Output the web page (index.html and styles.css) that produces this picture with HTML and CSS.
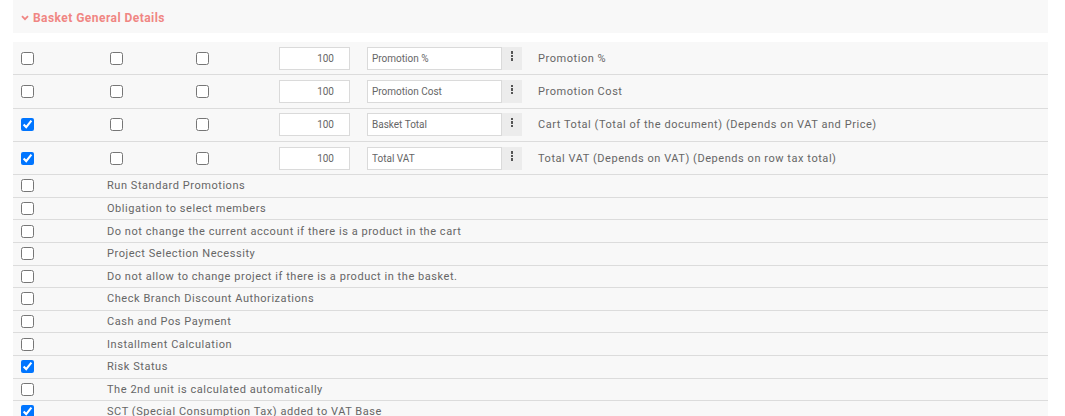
FILE: index.html
```html
<!DOCTYPE html>
<html lang="en">
<head>
    <meta charset="UTF-8">
    <meta name="viewport" content="width=device-width, initial-scale=1.0">
    <title>Basket General Details</title>
    <link rel="stylesheet" href="styles.css">
</head>
<body>

  <div class="panel">
    <div class="panel-head">
      <svg class="chevron" width="8" height="6" viewBox="0 0 8 6"><path d="M1 1.2 L4 4.2 L7 1.2" fill="none" stroke="#f08683" stroke-width="1.8"/></svg>
      <span>Basket General Details</span>
    </div>

    <div class="rows">
      <div class="row big">
        <div><input type="checkbox"></div>
        <div><input type="checkbox"></div>
        <div><input type="checkbox"></div>
        <div><input class="num" type="text" value="100"></div>
        <div><input class="name" type="text" value="Promotion %"></div>
        <div><span class="more"><i></i><i></i><i></i></span></div>
        <div class="label">Promotion %</div>
      </div>
      <div class="row big">
        <div><input type="checkbox"></div>
        <div><input type="checkbox"></div>
        <div><input type="checkbox"></div>
        <div><input class="num" type="text" value="100"></div>
        <div><input class="name" type="text" value="Promotion Cost"></div>
        <div><span class="more"><i></i><i></i><i></i></span></div>
        <div class="label">Promotion Cost</div>
      </div>
      <div class="row big">
        <div><input type="checkbox" checked></div>
        <div><input type="checkbox"></div>
        <div><input type="checkbox"></div>
        <div><input class="num" type="text" value="100"></div>
        <div><input class="name" type="text" value="Basket Total"></div>
        <div><span class="more"><i></i><i></i><i></i></span></div>
        <div class="label">Cart Total (Total of the document) (Depends on VAT and Price)</div>
      </div>
      <div class="row big">
        <div><input type="checkbox" checked></div>
        <div><input type="checkbox"></div>
        <div><input type="checkbox"></div>
        <div><input class="num" type="text" value="100"></div>
        <div><input class="name" type="text" value="Total VAT"></div>
        <div><span class="more"><i></i><i></i><i></i></span></div>
        <div class="label">Total VAT (Depends on VAT) (Depends on row tax total)</div>
      </div>

      <div class="row small"><div><input type="checkbox"></div><div class="label">Run Standard Promotions</div></div>
      <div class="row small"><div><input type="checkbox"></div><div class="label">Obligation to select members</div></div>
      <div class="row small"><div><input type="checkbox"></div><div class="label">Do not change the current account if there is a product in the cart</div></div>
      <div class="row small"><div><input type="checkbox"></div><div class="label">Project Selection Necessity</div></div>
      <div class="row small"><div><input type="checkbox"></div><div class="label">Do not allow to change project if there is a product in the basket.</div></div>
      <div class="row small"><div><input type="checkbox"></div><div class="label">Check Branch Discount Authorizations</div></div>
      <div class="row small"><div><input type="checkbox"></div><div class="label">Cash and Pos Payment</div></div>
      <div class="row small"><div><input type="checkbox"></div><div class="label">Installment Calculation</div></div>
      <div class="row small"><div><input type="checkbox" checked></div><div class="label">Risk Status</div></div>
      <div class="row small"><div><input type="checkbox"></div><div class="label">The 2nd unit is calculated automatically</div></div>
      <div class="row small"><div><input type="checkbox" checked></div><div class="label">SCT (Special Consumption Tax) added to VAT Base</div></div>
    </div>
  </div>

</body>
</html>
```

FILE: styles.css
```css
body {
  margin: 0;
  background: #fff;
  font-family: Roboto, "Liberation Sans", sans-serif;
  color: #666;
}

.panel {
  width: 1035px;
  margin-left: 13px;
}

.panel-head {
  height: 33px;
  background: #f8f8f8;
  display: flex;
  align-items: center;
  padding-left: 8px;
  padding-top: 2px;
  box-sizing: border-box;
  color: #f08683;
  font-size: 12px;
  font-weight: bold;
  letter-spacing: 0.45px;
}

.chevron {
  margin-right: 4px;
  margin-top: 1px;
}

.rows {
  margin-top: 9px;
  background: #f8f8f8;
}

.row {
  display: grid;
  align-items: center;
  padding-left: 8px;
  border-bottom: 1px solid #dcdcdc;
  font-size: 11px;
  letter-spacing: 0.55px;
}

.row > div {
  display: flex;
  align-items: center;
}

.row.big {
  height: 33.3px;
  box-sizing: border-box;
  grid-template-columns: 89px 86px 83px 88px 135px 36px 1fr;
}

.row.small {
  height: 22.6px;
  box-sizing: border-box;
  grid-template-columns: 86px 1fr;
}

input[type="checkbox"] {
  margin: 0;
  width: 13px;
  height: 13px;
}

.num,
.name {
  margin: 0;
  height: 23px;
  box-sizing: border-box;
  border: 1px solid #dadada;
  background: #fff;
  font-family: Roboto, "Liberation Sans", sans-serif;
  font-size: 10px;
  color: #666;
  outline: none;
}

.num {
  width: 71px;
  text-align: right;
  padding-right: 15px;
}

.name {
  width: 135px;
  padding-left: 4px;
}

.more {
  width: 20px;
  height: 23px;
  background: #ececec;
  display: flex;
  flex-direction: column;
  align-items: center;
  justify-content: center;
  gap: 1px;
  padding-bottom: 4px;
  box-sizing: border-box;
}

.more i {
  display: block;
  width: 2.5px;
  height: 2.5px;
  background: #555;
}

.label {
  color: #666;
}
```
